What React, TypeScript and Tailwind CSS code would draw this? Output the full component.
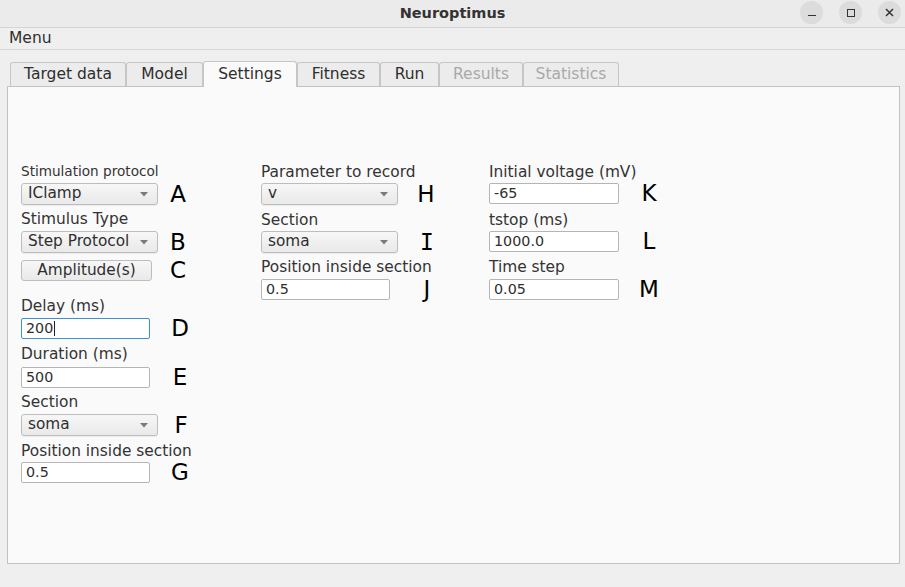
import React from "react";

const F = { fontFamily: '"DejaVu Sans", "Noto Sans", sans-serif' };
const LF = { fontFamily: '"DejaVu Sans", sans-serif' };

function Combo({ text, w }: { text: string; w: string }) {
  return (
    <div
      className={`${w} h-[22px] flex items-center justify-between rounded-[3px] border border-[#bdbdbd] bg-gradient-to-b from-[#f7f7f7] to-[#e9e9e9] pl-[6px] pr-[9px] text-[15.3px] text-[#2e2e2e] shadow-[0_1px_0_rgba(0,0,0,0.06)]`}
    >
      <span className="leading-none">{text}</span>
      <svg width="8" height="5" viewBox="0 0 8 5">
        <path d="M0 0 L8 0 L4 4.5 Z" fill="#7a7a7a" />
      </svg>
    </div>
  );
}

function Input({ text, w, focus }: { text: string; w: string; focus?: boolean }) {
  return (
    <div
      className={`${w} h-[21px] flex items-center rounded-[2px] border ${
        focus ? "border-[#3d8fd6]" : "border-[#b5b5b5]"
      } bg-white pl-[4px] text-[14.3px] text-[#2e2e2e]`}
    >
      <span className="leading-none">{text}</span>
      {focus && <span className="ml-[1px] inline-block h-[15px] w-[1px] bg-[#222]" />}
    </div>
  );
}

function Label({ text, small }: { text: string; small?: boolean }) {
  return (
    <div
      className={`h-[18px] flex items-center ${small ? "text-[13.6px]" : "text-[15.4px]"} text-[#333] leading-none whitespace-nowrap`}
    >
      {text}
    </div>
  );
}

function Row({
  children,
  letter,
  area,
  mono,
}: {
  children: React.ReactNode;
  letter: string;
  area: string;
  mono?: boolean;
}) {
  return (
    <div className="flex items-center">
      <div className={area}>{children}</div>
      <span
        className="w-[22px] h-[20px] flex items-center justify-center text-[23px] leading-none text-black"
        style={mono ? { fontFamily: '"DejaVu Sans Mono", monospace' } : LF}
      >
        {letter}
      </span>
    </div>
  );
}

export default function App() {
  const tabs = [
    { t: "Target data", w: "w-[116px]" },
    { t: "Model", w: "w-[77px]" },
    { t: "Settings", w: "w-[94px]", active: true },
    { t: "Fitness", w: "w-[83px]" },
    { t: "Run", w: "w-[59px]" },
    { t: "Results", w: "w-[84px]", disabled: true },
    { t: "Statistics", w: "w-[96px]", disabled: true },
  ];
  return (
    <div className="w-[905px] h-[587px] bg-[#efefef] flex flex-col overflow-hidden" style={F}>
      {/* title bar */}
      <div className="h-[28px] relative flex items-center justify-center bg-[#ebebeb] border-b border-[#d5d5d5] shrink-0">
        <span className="text-[14.5px] font-bold text-[#333]">Neuroptimus</span>
        <div className="absolute right-[4px] top-[1px] flex gap-[16px]">
          <div className="w-[23px] h-[23px] rounded-full bg-[#dcdcdc] flex items-center justify-center">
            <div className="w-[8px] h-[1.5px] bg-[#333] mt-[6px]" />
          </div>
          <div className="w-[23px] h-[23px] rounded-full bg-[#dcdcdc] flex items-center justify-center">
            <div className="w-[8px] h-[8px] border border-[#333]" />
          </div>
          <div className="w-[23px] h-[23px] rounded-full bg-[#dcdcdc] flex items-center justify-center">
            <svg width="9" height="9" viewBox="0 0 9 9">
              <path d="M1 1 L8 8 M8 1 L1 8" stroke="#333" strokeWidth="1.5" />
            </svg>
          </div>
        </div>
      </div>
      {/* menu bar */}
      <div className="h-[22px] flex items-center pl-[9px] border-b border-[#d8d8d8] bg-[#efefef] shrink-0">
        <span className="text-[15.5px] text-[#2e2e2e]">Menu</span>
      </div>
      {/* tabs */}
      <div className="mt-[11px] ml-[10px] flex items-end h-[25px] shrink-0">
        {tabs.map((tb) => (
          <div
            key={tb.t}
            className={`${tb.w} flex items-center justify-center text-[15.5px] border border-[#c6c6c6] rounded-t-[3px] ${
              tb.active
                ? "h-[26px] bg-[#fafafa] border-b-0 relative z-10 -mb-[1px]"
                : "h-[24px] bg-[#ececec] border-b-0"
            } ${tb.disabled ? "text-[#a9a9a9]" : "text-[#2e2e2e]"}`}
          >
            {tb.t}
          </div>
        ))}
      </div>
      <div className="mx-[7px] w-[893px] h-[478px] bg-[#fafafa] border border-[#c2c2c2] shrink-0 pt-[76px] pl-[13px] flex">
        {/* column 1 */}
        <div className="w-[240px] flex flex-col">
          <Label text="Stimulation protocol" small />
          <div className="h-[2px]" />
          <Row letter="A" area="w-[146px]">
            <Combo text="IClamp" w="w-[137px]" />
          </Row>
          <div className="h-[6px]" />
          <Label text="Stimulus Type" />
          <div className="h-[2px]" />
          <Row letter="B" area="w-[146px]">
            <Combo text="Step Protocol" w="w-[137px]" />
          </Row>
          <div className="h-[7px]" />
          <Row letter="C" area="w-[146px]">
            <div className="w-[131px] h-[21px] flex items-center justify-center rounded-[3px] border border-[#bdbdbd] bg-gradient-to-b from-[#f7f7f7] to-[#e9e9e9] text-[15.3px] text-[#2e2e2e]">
              Amplitude(s)
            </div>
          </Row>
          <div className="h-[17px]" />
          <Label text="Delay (ms)" />
          <div className="h-[2px]" />
          <Row letter="D" area="w-[148px]">
            <Input text="200" w="w-[129px]" focus />
          </Row>
          <div className="h-[7px]" />
          <Label text="Duration (ms)" />
          <div className="h-[3px]" />
          <Row letter="E" area="w-[148px]">
            <Input text="500" w="w-[129px]" />
          </Row>
          <div className="h-[6px]" />
          <Label text="Section" />
          <div className="h-[2px]" />
          <Row letter="F" area="w-[149px]">
            <Combo text="soma" w="w-[137px]" />
          </Row>
          <div className="h-[7px]" />
          <Label text="Position inside section" />
          <div className="h-[1px]" />
          <Row letter="G" area="w-[148px]">
            <Input text="0.5" w="w-[129px]" />
          </Row>
        </div>
        {/* column 2 */}
        <div className="w-[228px] flex flex-col pt-[1px]">
          <Label text="Parameter to record" />
          <div className="h-[1px]" />
          <Row letter="H" area="w-[154px]">
            <Combo text="v" w="w-[137px]" />
          </Row>
          <div className="h-[7px]" />
          <Label text="Section" />
          <div className="h-[1px]" />
          <Row letter="I" area="w-[155px]" mono>
            <Combo text="soma" w="w-[137px]" />
          </Row>
          <div className="h-[6px]" />
          <Label text="Position inside section" />
          <div className="h-[2px]" />
          <Row letter="J" area="w-[155px]">
            <Input text="0.5" w="w-[129px]" />
          </Row>
        </div>
        {/* column 3 */}
        <div className="w-[200px] flex flex-col pt-[1px]">
          <Label text="Initial voltage (mV)" />
          <div className="h-[1px]" />
          <Row letter="K" area="w-[149px]">
            <Input text="-65" w="w-[130px]" />
          </Row>
          <div className="h-[8px]" />
          <Label text="tstop (ms)" />
          <div className="h-[1px]" />
          <Row letter="L" area="w-[149px]">
            <Input text="1000.0" w="w-[130px]" />
          </Row>
          <div className="h-[7px]" />
          <Label text="Time step" />
          <div className="h-[2px]" />
          <Row letter="M" area="w-[149px]">
            <Input text="0.05" w="w-[130px]" />
          </Row>
        </div>
      </div>
    </div>
  );
}
